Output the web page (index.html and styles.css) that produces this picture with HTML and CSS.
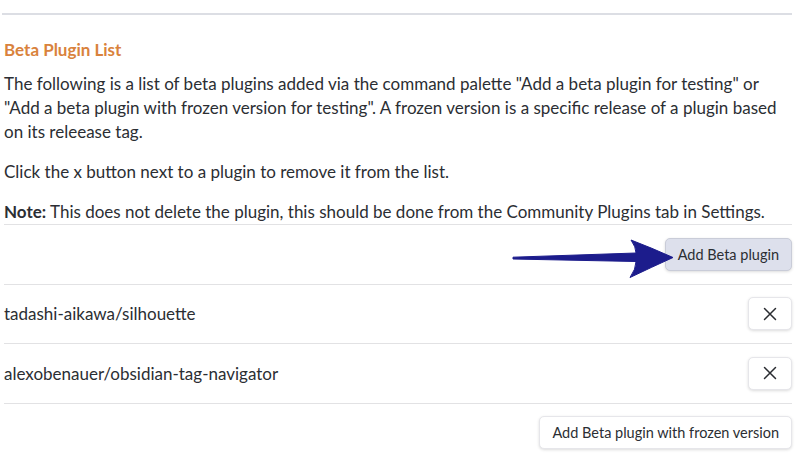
FILE: index.html
```html
<!DOCTYPE html>
<html>
<head>
<meta charset="utf-8">
<link rel="stylesheet" href="styles.css">
</head>
<body>
<div class="page">
  <div class="top-rule"></div>
  <h3 class="heading">Beta Plugin List</h3>
  <p class="desc first">The following is a list of beta plugins added via the command palette "Add a beta plugin for testing" or "Add a beta plugin with frozen version for testing". A frozen version is a specific release of a plugin based on its releease tag.</p>
  <p class="desc">Click the x button next to a plugin to remove it from the list.</p>
  <p class="desc"><b>Note:</b> This does not delete the plugin, this should be done from the Community Plugins tab in Settings.</p>
  <div class="setting">
    <div class="name"></div>
    <button class="btn btn-hover">Add Beta plugin</button>
  </div>
  <div class="setting">
    <div class="name">tadashi-aikawa/silhouette</div>
    <button class="btn btn-x" aria-label="Remove"><svg width="14" height="14" viewBox="0 0 14 14"><path d="M1.5 1.5 L12.5 12.5 M12.5 1.5 L1.5 12.5" stroke="#2a2c31" stroke-width="1.5" fill="none" stroke-linecap="round"/></svg></button>
  </div>
  <div class="setting">
    <div class="name">alexobenauer/obsidian-tag-navigator</div>
    <button class="btn btn-x" aria-label="Remove"><svg width="14" height="14" viewBox="0 0 14 14"><path d="M1.5 1.5 L12.5 12.5 M12.5 1.5 L1.5 12.5" stroke="#2a2c31" stroke-width="1.5" fill="none" stroke-linecap="round"/></svg></button>
  </div>
  <div class="setting">
    <div class="name"></div>
    <button class="btn">Add Beta plugin with frozen version</button>
  </div>
  <svg class="arrow" width="170" height="45" viewBox="0 0 170 45">
    <path d="M1 19.2 L124 15 Q124 9 119 2 Q140 10 161 19.5 Q140 29 118 39.5 Q124 31 124 23.5 L1 21 Z" fill="#1c1c8c" stroke="#1c1c8c" stroke-width="1" stroke-linejoin="round"/>
  </svg>
</div>
</body>
</html>
```

FILE: styles.css
```css
html, body {
  margin: 0;
  padding: 0;
  background: #ffffff;
}
body {
  font-family: "Lato", "Liberation Sans", sans-serif;
  color: #2b2e33;
  font-size: 17px;
}
.page {
  position: relative;
  padding: 13px 8px 0 4px;
}
.top-rule {
  height: 2px;
  background: #dcdee4;
  margin-left: -2px;
}
.heading {
  margin: 25px 0 0 0;
  font-size: 17px;
  line-height: 20px;
  font-weight: 700;
  color: #d9823c;
}
.desc {
  margin: 16px 0 0 0;
  line-height: 24px;
}
.desc.first {
  margin-top: 12px;
}
.setting {
  display: flex;
  align-items: center;
  justify-content: space-between;
  border-top: 1px solid #e2e2e4;
  padding: 12.5px 0 13px 0;
  min-height: 33px;
}
.name {
  font-size: 17px;
}
.btn {
  font-family: inherit;
  font-size: 14.5px;
  color: #2b2e33;
  background: #ffffff;
  border: 1px solid #e6e6ea;
  border-radius: 5px;
  box-shadow: 0 1px 3px rgba(0,0,0,0.14);
  height: 33px;
  padding: 0 12px;
}
.btn-hover {
  background: #dde0ec;
  border-color: #c9ccd8;
}
.btn-x {
  width: 44px;
  display: flex;
  align-items: center;
  justify-content: center;
  padding: 0;
}
.arrow {
  position: absolute;
  left: 512px;
  top: 238px;
}
```
